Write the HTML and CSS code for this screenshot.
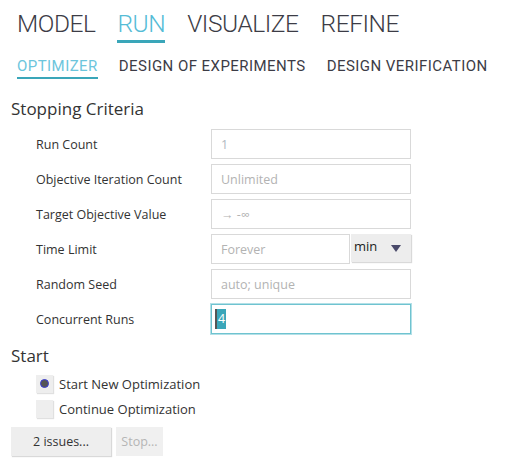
FILE: index.html
```html
<!DOCTYPE html>
<html>
<head>
<meta charset="utf-8">
<link rel="stylesheet" href="styles.css">
</head>
<body>
<div class="page">
  <nav class="tabs">
    <span class="tab">MODEL</span>
    <span class="tab active">RUN</span>
    <span class="tab">VISUALIZE</span>
    <span class="tab">REFINE</span>
  </nav>
  <nav class="subtabs">
    <span class="subtab active">OPTIMIZER</span>
    <span class="subtab">DESIGN OF EXPERIMENTS</span>
    <span class="subtab">DESIGN VERIFICATION</span>
  </nav>
  <h2 class="section">Stopping Criteria</h2>
  <div class="form">
    <label class="lbl">Run Count</label>
    <div class="field"><span class="ph light">1</span></div>
    <label class="lbl">Objective Iteration Count</label>
    <div class="field"><span class="ph">Unlimited</span></div>
    <label class="lbl">Target Objective Value</label>
    <div class="field"><span class="ph">→ -∞</span></div>
    <label class="lbl">Time Limit</label>
    <div class="combo">
      <div class="field short"><span class="ph">Forever</span></div>
      <div class="select"><span>min</span><svg width="10" height="7" viewBox="0 0 10 7"><path d="M0 0H10L5 7Z" fill="#4a4a6a"/></svg></div>
    </div>
    <label class="lbl">Random Seed</label>
    <div class="field"><span class="ph">auto; unique</span></div>
    <label class="lbl">Concurrent Runs</label>
    <div class="field focus"><span class="caret"></span><span class="sel">4</span></div>
  </div>
  <h2 class="section start">Start</h2>
  <div class="options">
    <div class="opt"><span class="box"><span class="dot"></span></span><span>Start New Optimization</span></div>
    <div class="opt"><span class="box"></span><span>Continue Optimization</span></div>
  </div>
  <div class="buttons">
    <button class="btn issues">2 issues...</button>
    <button class="btn stop">Stop...</button>
  </div>
</div>
</body>
</html>
```
FILE: styles.css
```css
* { box-sizing: border-box; }
html, body { margin: 0; padding: 0; background: #fff; }
body { font-family: "Open Sans", "Noto Sans", sans-serif; color: #333; width: 510px; height: 476px; overflow: hidden; }

.tabs { display: flex; padding: 8px 0 0 17px; height: 43px; white-space: nowrap; }
.tab { font-family: Roboto, "Open Sans", sans-serif; font-weight: 300; font-size: 24.5px; letter-spacing: -0.45px; color: #3c3c46; line-height: 32px; height: 35px; margin-right: 22px; border-bottom: 3px solid transparent; }
.tab.active { color: #55bcd6; border-bottom-color: #3aa6b9; }

.subtabs { display: flex; padding: 12px 0 0 17px; height: 36px; white-space: nowrap; }
.subtab { font-family: Roboto, "Open Sans", sans-serif; font-size: 15px; font-weight: 400; letter-spacing: 0.45px; color: #3c3c46; height: 24px; line-height: 23px; margin-right: 21px; border-bottom: 2px solid transparent; }
.subtab.active { color: #6cc5dc; border-bottom-color: #3aa6b9; }

.section { font-weight: 400; font-size: 17px; margin: 0; padding: 0 0 0 11px; height: 24px; line-height: 24px; margin-top: 18px; color: #333; }

.form { display: grid; grid-template-columns: 175px 200px; grid-auto-rows: 30px; row-gap: 5px; padding-left: 36px; margin-top: 8px; }
.lbl { font-size: 12.5px; display: flex; align-items: center; color: #333; }
.field { border: 1px solid #d9d9d9; height: 30px; display: flex; align-items: center; padding-left: 9px; font-size: 12.5px; }
.ph { color: #b3b3b3; }
.ph.light { color: #b0b8c0; }
.combo { display: flex; gap: 1px; }
.field.short { width: 139px; }
.select { width: 60px; height: 28px; background: #ededed; box-shadow: 1px 1px 1px rgba(0,0,0,0.15); display: flex; align-items: center; justify-content: space-between; padding: 0 10px 0 3px; font-size: 13px; color: #222; }
.select span { margin-top: -4px; }
.field.focus { border: 1px solid #6fc3d0; box-shadow: 0 0 0 1px #b3e0e7; padding-left: 3px; }
.caret { width: 2px; height: 20px; background: #555; }
.sel { background: #3aa6b9; color: #fff; height: 20px; line-height: 20px; padding: 0 1px; }

.section.start { margin-top: 10px; }
.options { padding-left: 36px; margin-top: 6px; display: flex; flex-direction: column; gap: 6px; }
.opt { display: flex; align-items: center; gap: 6px; font-size: 13px; height: 19px; }
.box { width: 17px; height: 18px; background: #eeeeee; box-shadow: 1px 1px 1px rgba(0,0,0,0.12); display: flex; align-items: center; justify-content: center; }
.dot { width: 9px; height: 9px; border-radius: 50%; background: #555; border: 1px solid #3a3ad8; }

.buttons { display: flex; gap: 5px; padding-left: 11px; margin-top: 9px; }
.btn { font-family: "Open Sans", "Noto Sans", sans-serif; font-size: 12.5px; border: none; height: 29px; background: #eeeeee; box-shadow: 1px 1px 1px rgba(0,0,0,0.15); padding: 0; color: #333; }
.btn.issues { width: 100px; }
.btn.stop { width: 47px; color: #b5b5b5; background: #f0f0f0; box-shadow: none; }
```
